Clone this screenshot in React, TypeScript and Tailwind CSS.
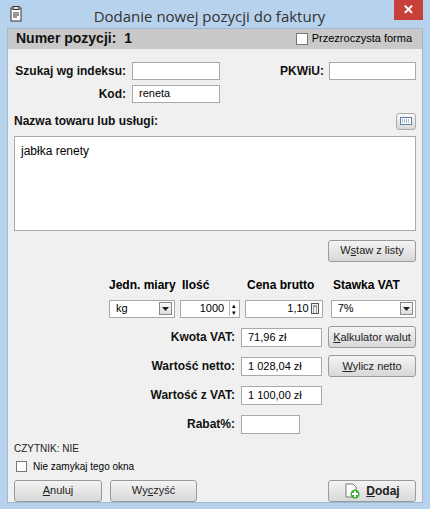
import React from "react";

const inp = "h-[18px] bg-white border border-[#a9a9a9] text-[11px] px-[6px] flex items-center";
const btn = "h-[22px] rounded-[3px] border border-[#9a9a9a] bg-gradient-to-b from-[#f4f4f4] to-[#d8d8d8] text-[11px] text-[#222] flex items-center justify-center";
const lbl = "text-[12px] font-bold text-[#111]";

function Arrow() {
  return (
    <div className="w-[13px] h-[13px] border border-[#888] bg-gradient-to-b from-[#fafafa] to-[#dcdcdc] flex items-center justify-center">
      <svg width="7" height="4" viewBox="0 0 7 4"><path d="M0 0h7L3.5 4z" fill="#222" /></svg>
    </div>
  );
}

export default function App() {
  return (
    <div className="w-[430px] h-[509px] bg-[#b7d2ec] flex flex-col" style={{ fontFamily: "'Liberation Sans', Tahoma, sans-serif" }}>
      <div className="h-[30px] flex items-start relative">
        <div className="w-[16px] h-[16px] ml-[9px] mt-[6px]">
          <svg width="14" height="16" viewBox="0 0 14 16"><rect x="2" y="2" width="10" height="13" fill="#fff" stroke="#333" /><rect x="4" y="0.5" width="6" height="3" fill="#ddd" stroke="#333" /><path d="M4 7h6M4 9h6M4 11h4" stroke="#333" /></svg>
        </div>
        <div className="flex-1 text-center text-[15px] text-[#333] mt-[5px]" style={{ fontFamily: "'Open Sans', sans-serif" }}>Dodanie nowej pozycji do faktury</div>
        <div className="w-[29px] h-[20px] bg-[#c7413a] mr-[7px] flex items-center justify-center text-white text-[13px] font-bold">✕</div>
      </div>
      <div className="mx-[7px] flex-1 bg-[#f0f0f0] flex flex-col border border-[#9fb9d3]">
        <div className="h-[20px] bg-[#c9c9c9] flex items-center justify-between px-[8px]">
          <span className="text-[14px] font-bold text-[#111]">Numer pozycji:&nbsp; 1</span>
          <span className="flex items-center gap-[4px] text-[11px] mr-[2px]"><span className="w-[12px] h-[12px] bg-white border border-[#777]" />Przezroczysta forma</span>
        </div>
        <div className="px-[6px] pt-[13px] flex flex-col">
          <div className="flex items-center h-[18px]">
            <span className={lbl + " w-[118px] text-right pr-[6px]"}>Szukaj wg indeksu:</span>
            <div className={inp + " w-[88px]"} />
            <span className={lbl + " ml-auto pr-[5px]"}>PKWiU:</span>
            <div className={inp + " w-[87px]"} />
          </div>
          <div className="flex items-center h-[18px] mt-[5px]">
            <span className={lbl + " w-[118px] text-right pr-[6px]"}>Kod:</span>
            <div className={inp + " w-[88px]"}>reneta</div>
          </div>
          <div className="flex items-end justify-between mt-[9px] h-[18px]">
            <span className={lbl}>Nazwa towaru lub usługi:</span>
            <div className="w-[20px] h-[17px] rounded-[3px] border border-[#aaa] bg-gradient-to-b from-[#fafafa] to-[#d8d8d8] flex items-center justify-center">
              <svg width="12" height="8" viewBox="0 0 12 8"><rect x="0.5" y="0.5" width="11" height="7" fill="#fff" stroke="#5b7fa8" /><path d="M2 3h8M2 5h8" stroke="#5b7fa8" strokeDasharray="1 1" /></svg>
            </div>
          </div>
          <div className="mt-[6px] h-[95px] bg-white border border-[#a9a9a9] px-[6px] py-[5px] text-[12px]">jabłka renety</div>
          <div className="flex justify-end mt-[9px]"><div className={btn + " w-[88px]"}><span>W<u>s</u>taw z listy</span></div></div>
          <div className="flex mt-[14px] ml-[95px] gap-[6px] text-[12px] font-bold">
            <span className="w-[67px]">Jedn. miary</span>
            <span className="w-[59px]">Ilość</span>
            <span className="w-[80px]">Cena brutto</span>
            <span>Stawka VAT</span>
          </div>
          <div className="flex mt-[6px] ml-[95px] gap-[5px] h-[19px]">
            <div className={inp + " w-[68px] justify-between pr-[2px]"}>kg<Arrow /></div>
            <div className={inp + " w-[62px] justify-end pr-[1px]"}>1000<div className="ml-[5px] w-[9px] h-[15px] border-l border-[#bbb] flex flex-col items-center justify-center text-[7px] leading-[7px]">▴<br />▾</div></div>
            <div className={inp + " w-[80px] justify-end pr-[3px]"}>1,10<svg className="ml-[2px]" width="8" height="11" viewBox="0 0 8 11"><rect x="0.5" y="0.5" width="7" height="10" fill="#eee" stroke="#555" /><path d="M2 3h4M2 5h1M5 5h1M2 7h1M5 7h1M2 9h1M5 9h1" stroke="#555" /></svg></div>
            <div className={inp + " w-[88px] justify-between pr-[2px] ml-[3px]"}>7%<Arrow /></div>
          </div>
          {[
            ["Kwota VAT:", "71,96 zł", <span><u>K</u>alkulator walut</span>],
            ["Wartość netto:", "1 028,04 zł", <span><u>W</u>ylicz netto</span>],
            ["Wartość z VAT:", "1 100,00 zł", null],
          ].map(([l, v, b], i) => (
            <div key={i} className="flex items-center mt-[8px] h-[21px]">
              <span className={lbl + " w-[227px] text-right pr-[6px]"}>{l}</span>
              <div className={inp + " w-[81px] h-[19px]"}>{v}</div>
              {b && <div className={btn + " w-[88px] ml-[6px]"}>{b}</div>}
            </div>
          ))}
          <div className="flex items-center mt-[8px] h-[21px]">
            <span className={lbl + " w-[227px] text-right pr-[6px]"}>Rabat%:</span>
            <div className={inp + " w-[59px] h-[19px]"} />
          </div>
          <div className="text-[10px] mt-[6px] text-[#222]">CZYTNIK: NIE</div>
          <div className="flex items-center gap-[6px] text-[10px] mt-[3px] ml-[2px]"><span className="w-[11px] h-[11px] bg-white border border-[#777]" />Nie zamykaj tego okna</div>
          <div className="flex mt-[6px] gap-[8px]">
            <div className={btn + " w-[88px]"}><span><u>A</u>nuluj</span></div>
            <div className={btn + " w-[87px]"}><span>Wy<u>c</u>zyść</span></div>
            <div className={btn + " w-[88px] ml-auto gap-[6px]"}>
              <svg width="16" height="16" viewBox="0 0 16 16"><path d="M2 1h7l3 3v10H2z" fill="#fff" stroke="#777" /><circle cx="11" cy="11" r="4.5" fill="#3fae3a" /><path d="M11 8v6M8 11h6" stroke="#fff" strokeWidth="2" /></svg>
              <span className="font-bold text-[12px]"><u>D</u>odaj</span>
            </div>
          </div>
        </div>
      </div>
      <div className="h-[8px]" />
    </div>
  );
}
